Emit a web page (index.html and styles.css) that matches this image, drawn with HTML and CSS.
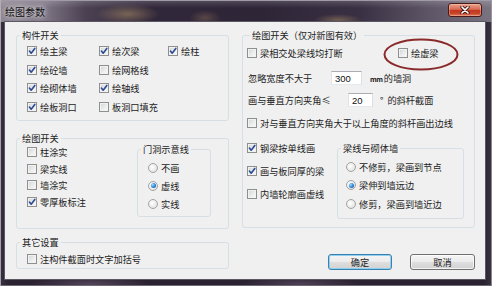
FILE: index.html
```html
<!DOCTYPE html>
<html lang="zh-CN">
<head>
<meta charset="utf-8">
<title>绘图参数</title>
<link rel="stylesheet" href="styles.css">
</head>
<body>
<div class="window">
  <div class="titlebar">
    <span class="title">绘图参数</span>
    <span class="close"><svg viewBox="0 0 10 8" width="10" height="8"><path d="M2 1 L8 7 M8 1 L2 7" stroke="#3a1010" stroke-width="3.2" stroke-linecap="round"/><path d="M2 1 L8 7 M8 1 L2 7" stroke="#ffffff" stroke-width="1.7" stroke-linecap="round"/></svg></span>
  </div>
  <div class="client">
    <div class="col-left">
      <div class="group g1">
        <div class="legend">构件开关</div>
        <div class="grid3">
          <label class="item"><span class="cb"><svg viewBox="0 0 8 8"><path d="M1.4 4 L3.2 6.2 L6.8 1.4"/></svg></span>绘主梁</label>
          <label class="item"><span class="cb"><svg viewBox="0 0 8 8"><path d="M1.4 4 L3.2 6.2 L6.8 1.4"/></svg></span>绘次梁</label>
          <label class="item"><span class="cb"><svg viewBox="0 0 8 8"><path d="M1.4 4 L3.2 6.2 L6.8 1.4"/></svg></span>绘柱</label>
          <label class="item"><span class="cb"><svg viewBox="0 0 8 8"><path d="M1.4 4 L3.2 6.2 L6.8 1.4"/></svg></span>绘砼墙</label>
          <label class="item"><span class="cb"></span>绘网格线</label>
          <span></span>
          <label class="item"><span class="cb"><svg viewBox="0 0 8 8"><path d="M1.4 4 L3.2 6.2 L6.8 1.4"/></svg></span>绘砌体墙</label>
          <label class="item"><span class="cb"><svg viewBox="0 0 8 8"><path d="M1.4 4 L3.2 6.2 L6.8 1.4"/></svg></span>绘轴线</label>
          <span></span>
          <label class="item"><span class="cb"><svg viewBox="0 0 8 8"><path d="M1.4 4 L3.2 6.2 L6.8 1.4"/></svg></span>绘板洞口</label>
          <label class="item"><span class="cb"></span>板洞口填充</label>
          <span></span>
        </div>
      </div>

      <div class="group g2">
        <div class="legend">绘图开关</div>
        <div class="g2-body">
          <div class="checks">
            <label class="item"><span class="cb"></span>柱涂实</label>
            <label class="item"><span class="cb"></span>梁实线</label>
            <label class="item"><span class="cb"></span>墙涂实</label>
            <label class="item"><span class="cb"><svg viewBox="0 0 8 8"><path d="M1.4 4 L3.2 6.2 L6.8 1.4"/></svg></span>零厚板标注</label>
          </div>
          <div class="group sub1">
            <div class="legend">门洞示意线</div>
            <div class="radios">
              <label class="item"><span class="rb"></span>不画</label>
              <label class="item"><span class="rb on"></span>虚线</label>
              <label class="item"><span class="rb"></span>实线</label>
            </div>
          </div>
        </div>
      </div>

      <div class="group g3">
        <div class="legend">其它设置</div>
        <label class="item"><span class="cb"></span>注构件截面时文字加括号</label>
      </div>
    </div>

    <div class="col-right">
      <div class="group gr">
        <div class="legend">绘图开关（仅对新图有效）</div>
        <div class="r1">
          <label class="item first"><span class="cb"></span>梁相交处梁线均打断</label>
          <label class="item virt"><span class="cb"></span>绘虚梁<svg class="ring" viewBox="0 0 76 33"><ellipse cx="38" cy="16.5" rx="36.5" ry="15" fill="none" stroke="#8a2a2a" stroke-width="2"/></svg></label>
        </div>
        <div class="r2">
          <span class="lbl w83">忽略宽度不大于</span>
          <input class="field w31" type="text" value="300">
          <span class="after"><span class="mm">mm</span>的墙洞</span>
        </div>
        <div class="r3">
          <span class="lbl w100">画与垂直方向夹角≤</span>
          <input class="field w25" type="text" value="20">
          <span class="deg">°</span>
          <span class="after2">的斜杆截面</span>
        </div>
        <div class="r4">
          <label class="item"><span class="cb"></span>对与垂直方向夹角大于以上角度的斜杆画出边线</label>
        </div>
        <div class="lower">
          <div class="checks">
            <label class="item"><span class="cb"><svg viewBox="0 0 8 8"><path d="M1.4 4 L3.2 6.2 L6.8 1.4"/></svg></span>钢梁按单线画</label>
            <label class="item"><span class="cb"><svg viewBox="0 0 8 8"><path d="M1.4 4 L3.2 6.2 L6.8 1.4"/></svg></span>画与板同厚的梁</label>
            <label class="item"><span class="cb"></span>内墙轮廓画虚线</label>
          </div>
          <div class="group sub2">
            <div class="legend">梁线与砌体墙</div>
            <div class="radios">
              <label class="item"><span class="rb"></span>不修剪，梁画到节点</label>
              <label class="item"><span class="rb on"></span>梁伸到墙远边</label>
              <label class="item"><span class="rb"></span>修剪，梁画到墙近边</label>
            </div>
          </div>
        </div>
      </div>
      <div class="buttons">
        <button class="btn default" type="button">确定</button>
        <button class="btn cancel" type="button">取消</button>
      </div>
    </div>
  </div>
</div>
</body>
</html>
```

FILE: styles.css
```css
* { box-sizing: border-box; }
html, body { margin: 0; padding: 0; }
body {
  width: 492px;
  height: 286px;
  overflow: hidden;
  background: #2b2331;
  font-family: "Noto Sans CJK SC", "Noto Sans", sans-serif;
  font-size: 9.2px;
  color: #1c1c1c;
}

.window {
  width: 492px;
  height: 286px;
  display: flex;
  flex-direction: column;
  background:
    radial-gradient(ellipse 60px 8px at 90px 284px, rgba(120,100,130,.5), transparent),
    radial-gradient(ellipse 60px 8px at 300px 284px, rgba(120,100,130,.45), transparent),
    linear-gradient(to right, #3a3240 0, #2a2230 8px, #2a2230 484px, #3b3441 492px);
  box-shadow: inset 1px 0 0 #a59fa9, inset -1px 0 0 #8b8591, inset 0 -1px 0 #6f6875;
}

.titlebar {
  height: 22px;
  display: flex;
  justify-content: space-between;
  align-items: flex-start;
  padding: 0 10px 0 5px;
  background:
    linear-gradient(to bottom, rgba(255,255,255,.18), rgba(255,255,255,0) 8px),
    radial-gradient(ellipse 32px 10px at 128px 14px, rgba(170,140,100,.55), transparent),
    radial-gradient(ellipse 16px 8px at 205px 18px, rgba(150,120,90,.4), transparent),
    radial-gradient(ellipse 24px 6px at 338px 20px, rgba(170,140,100,.5), transparent),
    linear-gradient(to right, #8c8591 0, #7d7484 45px, #4b4152 85px, #30273a 150px, #2e2537 260px, #3a3043 360px, #5e5667 430px, #7a7380 492px);
  box-shadow: inset 1px 0 0 #b2adb6, inset -1px 0 0 #9a94a0, inset 0 1px 0 #a09aa6;
}
.title {
  line-height: 22px;
  padding-top: 1px;
  font-size: 10px;
  color: #111;
  text-shadow: 0 0 5px rgba(255,255,255,.9), 0 0 9px rgba(255,255,255,.6);
}
.close {
  margin-top: 3px;
  width: 34px;
  height: 14px;
  border: 1px solid #4b1a16;
  border-radius: 3px;
  background: linear-gradient(#e8a28f 0%, #d86a52 45%, #c3371f 52%, #c6432a 78%, #e0805e 100%);
  box-shadow: inset 0 0 0 1px rgba(255,220,210,.35);
  display: flex;
  align-items: center;
  justify-content: center;
}
.close svg { display: block; }

.client {
  flex: 1;
  margin: 0 7px 7px 5px;
  background: #f0f0f0;
  display: grid;
  grid-template-columns: 213px 233px;
  column-gap: 13px;
  padding-left: 11px;
  align-content: start;
  box-shadow: 0 0 0 1px #5d5663;
}

.col-left, .col-right {
  display: flex;
  flex-direction: column;
  padding-top: 13px;
}

.group {
  border: 1px solid #d5dfe5;
  border-radius: 3px;
}
.legend {
  width: fit-content;
  height: 12px;
  line-height: 12px;
  margin: -7px 0 0 3px;
  padding: 0 2px;
  background: #f0f0f0;
  white-space: nowrap;
}

.item {
  display: flex;
  align-items: center;
  gap: 3px;
  white-space: nowrap;
}
.cb {
  flex: none;
  width: 10px;
  height: 10px;
  border: 1px solid #8e8f8f;
  background: linear-gradient(135deg, #cfd2d6 0%, #ececec 55%, #fbfbfb 100%);
  box-shadow: inset 0 0 0 1px #f2f2f2;
}
.cb svg {
  display: block;
  width: 8px;
  height: 8px;
}
.cb svg path {
  fill: none;
  stroke: #2b4a94;
  stroke-width: 1.6;
  stroke-linecap: round;
  stroke-linejoin: round;
}
.rb {
  flex: none;
  width: 10px;
  height: 10px;
  border-radius: 50%;
  border: 1px solid #a3a3a3;
  background: radial-gradient(circle at 40% 40%, #ffffff 0%, #e9e9e9 60%, #d2d2d2 100%);
  display: flex;
  align-items: center;
  justify-content: center;
}
.rb.on::after {
  content: "";
  width: 5px;
  height: 5px;
  border-radius: 50%;
  background: radial-gradient(circle at 35% 35%, #9ee0ff 0%, #2a7fd6 55%, #0d4f9f 100%);
}

/* group 1 */
.g1 { height: 86px; }
.grid3 {
  display: grid;
  grid-template-columns: 72px 69px auto;
  grid-auto-rows: 18.5px;
  padding: 1px 0 0 10px;
}

/* group 2 */
.g2 { height: 91px; margin-top: 17px; }
.g2-body { display: flex; padding-left: 10px; }
.g2-body .checks { width: 110px; display: flex; flex-direction: column; }
.g2-body .checks .item { height: 16.5px; }
.sub1 { width: 74px; height: 68px; margin-top: 5px; }
.sub1 .radios { margin-top: 3.5px; padding-left: 10px; }
.sub1 .radios .item { height: 18px; }

/* group 3 */
.g3 { height: 27px; margin-top: 13px; }
.g3 .item { height: 16px; margin: 3px 0 0 10px; }

/* right group */
.gr { height: 193px; padding-left: 4px; }
.r1 { margin-top: 4px; height: 16px; display: flex; }
.r1 .first { width: 151px; }
.virt { position: relative; }
.ring {
  position: absolute;
  left: -15px;
  top: -7px;
  width: 76px;
  height: 33px;
  pointer-events: none;
}
.r2, .r3 {
  height: 16px;
  display: flex;
  align-items: center;
  padding-left: 1px;
  white-space: nowrap;
}
.r2 { margin-top: 9px; }
.r3 { margin-top: 6px; }
.lbl { flex: none; }
.w83 { width: 83px; }
.w100 { width: 100px; }
.field {
  flex: none;
  height: 14px;
  margin: 0;
  padding: 0 0 0 3px;
  border: 1px solid;
  border-color: #abadb3 #dbdfe6 #e3e9ef #e2e3ea;
  background: #fff;
  font-family: "Liberation Sans", Arial, sans-serif;
  font-size: 9.5px;
  color: #111;
  outline: none;
}
.w31 { width: 31px; }
.w25 { width: 25px; }
.after { margin-left: 8px; }
.mm { font-size: 7px; font-weight: bold; letter-spacing: -0.4px; margin-right: 1px; }
.deg { margin-left: 7px; }
.after2 { margin-left: 4px; }
.r4 { margin-top: 7px; height: 16px; display: flex; }

.lower { margin-top: 9px; display: flex; }
.lower .checks {
  width: 90px;
  display: flex;
  flex-direction: column;
  gap: 7px;
}
.lower .checks .item { height: 16px; }
.sub2 { width: 127px; height: 71px; margin-top: 8px; }
.sub2 .radios { margin-top: 3.5px; padding-left: 8px; }
.sub2 .radios .item { height: 18.5px; }

/* buttons */
.buttons {
  display: flex;
  justify-content: flex-end;
  gap: 18px;
  margin-top: 26px;
}
.btn {
  height: 16px;
  width: 64px;
  margin: 0;
  padding: 0;
  border: 1px solid #707070;
  border-radius: 3px;
  background: linear-gradient(#f4f4f4 0%, #ececec 48%, #dedede 52%, #d2d2d2 100%);
  box-shadow: inset 0 0 0 1px rgba(255,255,255,.7);
  font-family: "Noto Sans CJK SC", "Noto Sans", sans-serif;
  font-size: 9.2px;
  line-height: 14px;
  color: #1c1c1c;
}
.btn.default {
  border-color: #3c7fb1;
  box-shadow: inset 0 0 0 1px #8fd0ef;
}
.btn.cancel { width: 65px; }
```
